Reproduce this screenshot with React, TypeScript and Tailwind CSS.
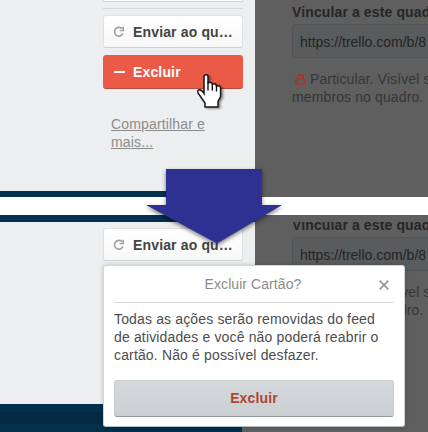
function ReloadIcon() {
  return (
    <svg width="12" height="12" viewBox="0 0 12 12" fill="none" className="shrink-0">
      <path d="M9 2.6A4.4 4.4 0 1 0 10 7.4" stroke="#a0a0a0" strokeWidth="1.6" />
      <path d="M11 0.8V5.2H6.7V4.1H9.4V0.8Z" fill="#a0a0a0" />
    </svg>
  );
}

function LockIcon() {
  return (
    <svg width="11" height="11" viewBox="0 0 11 11" fill="none" stroke="#a83428" className="mr-1 ml-[3px] inline-block align-[-1px]">
      <path d="M2.9 5V3.3a2.6 2.6 0 0 1 5.2 0V5" strokeWidth="1.5" />
      <rect x="1" y="5" width="9" height="5" rx="0.7" strokeWidth="1.7" />
    </svg>
  );
}

function SendButton() {
  return (
    <button className="flex h-[33px] w-[140px] items-center rounded-[3px] border border-[#dfe1e2] border-b-[#cbd0d2] bg-gradient-to-b from-white to-[#f8f8f8] pl-[9px] text-[#444]">
      <ReloadIcon />
      <span className="ml-2 pt-[2px] text-[14px] font-bold tracking-[0.15px] whitespace-nowrap">Enviar ao qu…</span>
    </button>
  );
}

function BoardLink() {
  return (
    <div className="w-[173px] shrink-0 overflow-hidden bg-[#5f5f5f] pl-[37px] text-[14px] leading-[18px] tracking-[0.12px] whitespace-nowrap">
      <div className="pt-[3px] font-bold text-[#262626]">Vincular a este quadro</div>
      <div className="mt-[3px] flex h-[34px] w-[200px] items-center rounded-[3px] border border-[#515457] bg-[#595b5d] pt-[2px] pl-[7px] tracking-normal text-[#242424]">
        https://trello.com/b/8
      </div>
      <div className="mt-[12px] text-[#363636]">
        <LockIcon />Particular. Visível só para
        <br />
        membros no quadro.
      </div>
    </div>
  );
}

function Hand() {
  return (
    <svg width="30" height="37" viewBox="0 0 30 37" className="absolute top-[73px] left-[195px] drop-shadow-[2px_1px_1px_rgba(0,0,0,0.4)]">
      <path
        d="M9 3.5Q9 1.8 11 1.8Q13 1.8 13 3.5V9.8Q17 8.8 17.4 11.2Q21 10 21.5 13Q25.6 12.2 25.6 15.5V23.5L23 28.5V34H10V30L3 20Q2.2 17 4.5 16.8Q7 17 9 20.5Z"
        fill="#fff"
        stroke="#151515"
        strokeWidth="1.5"
      />
      <path d="M13 9.5V17.5M17.3 11V17.5M21.5 12.5V18.5" stroke="#151515" strokeWidth="1.4" />
    </svg>
  );
}

function DeletePopover() {
  return (
    <div className="absolute top-[265px] left-[103px] h-[162px] w-[302px] rounded-[3px] border border-[#d1d6d7] border-b-[#b5bfc1] bg-white px-[10px] text-[14px] shadow-[0_0_4px_rgba(0,0,0,0.2)]">
      <div className="relative flex h-[37px] items-center justify-center border-b border-[#d6d8d9] text-[#8c8c8c]">
        <span className="-translate-x-px tracking-[0.07px]">Excluir Cartão?</span>
        <svg width="10" height="10" viewBox="0 0 10 10" className="absolute top-[14px] right-[5px]">
          <path d="M0.7 0.7L9.3 9.3M9.3 0.7L0.7 9.3" stroke="#999" strokeWidth="1.8" />
        </svg>
      </div>
      <p className="mt-[7px] leading-[18px] tracking-[0.15px] whitespace-nowrap text-[#4d4d4d]">
        Todas as ações serão removidas do feed
        <br />
        de atividades e você não poderá reabrir o
        <br />
        cartão. Não é possível desfazer.
      </p>
      <button className="mt-[16px] h-[37px] w-full rounded-[3px] border border-[#c7cccd] border-b-[#92999c] bg-gradient-to-b from-[#d5d9db] to-[#cacfd1] font-bold tracking-[0.15px] text-[#b04632]">
        Excluir
      </button>
    </div>
  );
}

export default function App() {
  return (
    <div className="relative h-[432px] w-[428px] overflow-hidden bg-white font-['Liberation_Sans',Arial,sans-serif]">
      <section className="flex h-[197px]">
        <div className="w-[255px] border-b-[6px] border-[#03304c] bg-[#edeef0] pl-[103px]">
          <div className="h-[2px] w-[140px] rounded-b-[3px] border border-t-0 border-[#d0d3d5] bg-white" />
          <div className="mt-[6px] h-px w-[140px] bg-[#d3d5d7]" />
          <div className="mt-[6px]"><SendButton /></div>
          <button className="mt-[7px] flex h-[34px] w-[140px] items-center rounded-[3px] border-b border-[#b84d3f] bg-[#eb5a46] pl-[11px] text-[14px] font-bold tracking-[0.15px] text-white">
            <span className="h-[2px] w-[11px] bg-white" />
            <span className="ml-2 pt-[2px]">Excluir</span>
          </button>
          <a className="mt-[26px] ml-2 block w-[110px] text-[14px] leading-[18px] tracking-[0.15px] text-[#8c8c8c] underline">
            Compartilhar e<br />mais...
          </a>
        </div>
        <BoardLink />
      </section>
      <section className="mt-[18px] flex h-[217px] overflow-hidden">
        <div className="flex w-[255px] shrink-0 flex-col border-t-[7px] border-[#03304c] bg-[#edeef0]">
          <div className="h-[182px] pt-[6px] pl-[103px]"><SendButton /></div>
          <div className="flex h-[28px] bg-[#5f5f5f]">
            <div className="w-[242px] border-y-[8px] border-[#03304c] bg-[#052b43]" />
          </div>
        </div>
        <div className="w-[173px] bg-[#5f5f5f] pt-[7px]">
          <div className="h-[210px] overflow-hidden">
            <div className="-mt-[9px]"><BoardLink /></div>
          </div>
        </div>
      </section>
      <svg width="150" height="85" viewBox="0 0 150 85" className="absolute top-[165px] left-[141px] drop-shadow-[0px_2px_2px_rgba(0,0,0,0.5)]">
        <path d="M25 4H121V40H141L76 78.5L5 40H25Z" fill="#2e3192" />
      </svg>
      <DeletePopover />
      <Hand />
    </div>
  );
}
